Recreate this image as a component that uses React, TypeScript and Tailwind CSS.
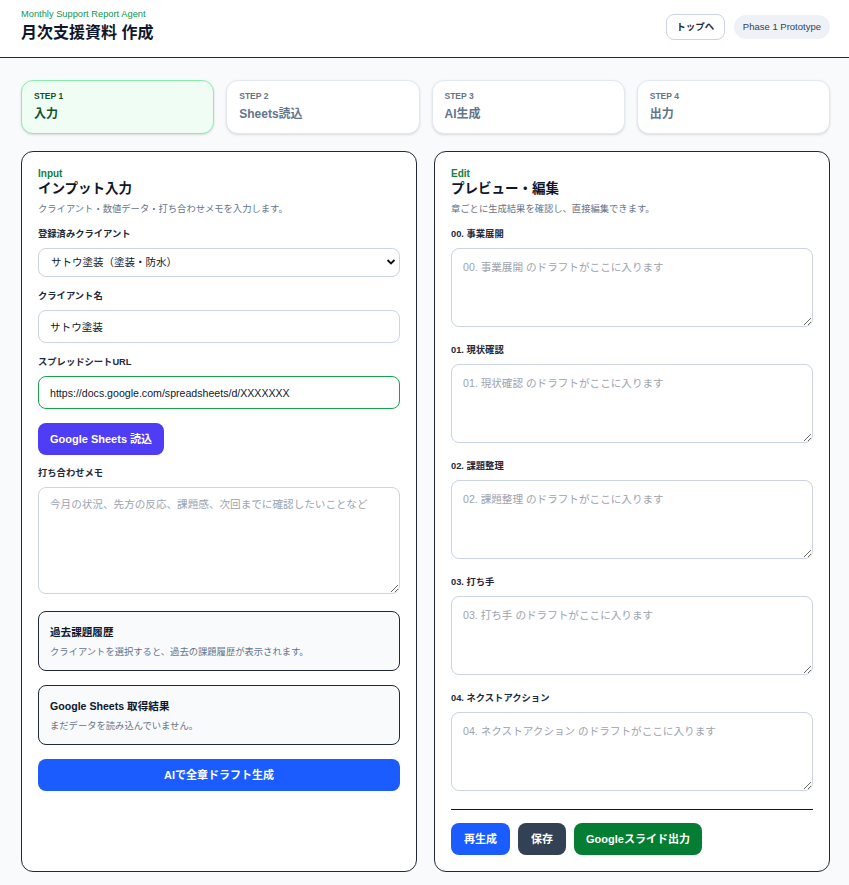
import React from "react";

const font = { fontFamily: '"Liberation Sans", "Noto Sans CJK JP", sans-serif' };

const steps = [
  { label: "STEP 1", title: "入力", active: true },
  { label: "STEP 2", title: "Sheets読込", active: false },
  { label: "STEP 3", title: "AI生成", active: false },
  { label: "STEP 4", title: "出力", active: false },
];

const sections = ["00. 事業展開", "01. 現状確認", "02. 課題整理", "03. 打ち手", "04. ネクストアクション"];

const Label = ({ children, className = "" }: { children: React.ReactNode; className?: string }) => (
  <label className={`block text-[9.3px] font-bold leading-[12px] text-[#1e293b] ${className}`}>{children}</label>
);

const PanelHead = ({ kicker, title, desc }: { kicker: string; title: string; desc: string }) => (
  <div>
    <div className="text-[10px] font-bold leading-[12px] text-[#15803d]">{kicker}</div>
    <h2 className="text-[13.5px] font-bold leading-[18px] text-[#0f172a]">{title}</h2>
    <p className="mt-[5px] text-[9.3px] leading-[12px] text-[#64748b]">{desc}</p>
  </div>
);

export default function App() {
  return (
    <div className="min-h-screen bg-[#f8fafc]" style={font}>
      <header className="flex h-[58px] justify-between border-b border-[#1f2937] bg-white pl-[21px] pr-[19px]">
        <div className="pt-[8px]">
          <div className="text-[9.3px] leading-[13px] text-[#0f9455]">Monthly Support Report Agent</div>
          <h1 className="mt-[1px] text-[16px] font-bold leading-[22px] text-[#0f172a]">月次支援資料 作成</h1>
        </div>
        <div className="flex items-center gap-[9px] self-start pt-[14px]">
          <button className="h-[26px] w-[59px] rounded-lg border border-[#cbd5e1] bg-white text-[9.5px] font-bold text-[#1e293b]">
            トップへ
          </button>
          <span className="flex h-[24px] items-center rounded-full bg-[#eef2f7] px-[9px] text-[9.5px] text-[#334155]">
            Phase 1 Prototype
          </span>
        </div>
      </header>

      <main className="pb-[14px] pl-[21px] pr-[19px] pt-[22px]">
        <div className="grid grid-cols-4 gap-[12px]">
          {steps.map((s) => (
            <div
              key={s.label}
              className={`h-[54px] rounded-xl border px-[12px] pt-[9px] shadow-sm ${
                s.active ? "border-[#86efac] bg-[#f0fdf4]" : "border-[#e2e8f0] bg-white"
              }`}
            >
              <div className={`text-[8.5px] font-bold leading-[12px] ${s.active ? "text-[#14532d]" : "text-[#64748b]"}`}>
                {s.label}
              </div>
              <div className={`mt-[3px] text-[12px] font-bold leading-[18px] ${s.active ? "text-[#14532d]" : "text-[#64748b]"}`}>
                {s.title}
              </div>
            </div>
          ))}
        </div>

        <div className="mt-[17px] grid grid-cols-2 gap-[17px]">
          <section className="h-[721px] rounded-xl border border-[#1f2937] bg-white px-4 pt-4">
            <PanelHead kicker="Input" title="インプット入力" desc="クライアント・数値データ・打ち合わせメモを入力します。" />

            <Label className="mt-[13px]">登録済みクライアント</Label>
            <div className="relative mt-[8px]">
              <select className="h-[29px] w-full appearance-none rounded-lg border border-[#cbd5e1] bg-white pl-[12px] text-[10.5px] text-[#0f172a] outline-none">
                <option>サトウ塗装（塗装・防水）</option>
              </select>
              <svg className="pointer-events-none absolute right-[4px] top-[10px]" width="10" height="8" viewBox="0 0 10 8">
                <path d="M1.5 2 L5 5.5 L8.5 2" fill="none" stroke="#111" strokeWidth="1.8" />
              </svg>
            </div>

            <Label className="mt-[13px]">クライアント名</Label>
            <input
              defaultValue="サトウ塗装"
              className="mt-[8px] h-[33px] w-full rounded-lg border border-[#cbd5e1] px-[11px] text-[10.6px] text-[#0f172a] outline-none"
            />

            <Label className="mt-[13px]">スプレッドシートURL</Label>
            <input
              defaultValue="https://docs.google.com/spreadsheets/d/XXXXXXX"
              className="mt-[8px] h-[33px] w-full rounded-lg border border-[#16a34a] px-[11px] text-[10.6px] text-[#0f172a] outline-none"
            />

            <button className="mt-[14px] h-[32px] rounded-lg bg-[#4f3cf5] px-[12px] text-[11px] font-bold text-white">
              Google Sheets 読込
            </button>

            <Label className="mt-[12px]">打ち合わせメモ</Label>
            <textarea
              placeholder="今月の状況、先方の反応、課題感、次回までに確認したいことなど"
              className="mt-[8px] block h-[107px] w-full rounded-lg border border-[#cbd5e1] px-[11px] py-[8px] text-[10.6px] leading-[16px] outline-none placeholder:text-[#9ca3af]"
            />

            <div className="mt-[17px] h-[60px] rounded-lg border border-[#1f2937] bg-[#f8fafc] px-[11px] pt-[13px]">
              <div className="text-[10.6px] font-bold leading-[14px] text-[#0f172a]">過去課題履歴</div>
              <div className="mt-[7px] text-[9.3px] leading-[12px] text-[#64748b]">
                クライアントを選択すると、過去の課題履歴が表示されます。
              </div>
            </div>

            <div className="mt-[14px] h-[60px] rounded-lg border border-[#1f2937] bg-[#f8fafc] px-[11px] pt-[13px]">
              <div className="text-[10.6px] font-bold leading-[14px] text-[#0f172a]">Google Sheets 取得結果</div>
              <div className="mt-[7px] text-[9.3px] leading-[12px] text-[#64748b]">まだデータを読み込んでいません。</div>
            </div>

            <button className="mt-[14px] h-[32px] w-full rounded-lg bg-[#1a5cff] text-[11px] font-bold text-white">
              AIで全章ドラフト生成
            </button>
          </section>

          <section className="h-[721px] rounded-xl border border-[#1f2937] bg-white px-4 pt-4">
            <PanelHead kicker="Edit" title="プレビュー・編集" desc="章ごとに生成結果を確認し、直接編集できます。" />

            {sections.map((s, i) => (
              <div key={s} className={i === 0 ? "mt-[13px]" : "mt-[17px]"}>
                <Label>{s}</Label>
                <textarea
                  placeholder={`${s} のドラフトがここに入ります`}
                  className="mt-[8px] block h-[79px] w-full rounded-lg border border-[#cbd5e1] px-[11px] py-[10px] text-[10.6px] leading-[16px] outline-none placeholder:text-[#9ca3af]"
                />
              </div>
            ))}

            <div className="mt-[18px] border-t border-[#111827]" />

            <div className="mt-[13px] flex gap-[8px]">
              <button className="h-[32px] rounded-lg bg-[#1a5cff] px-[13px] text-[11px] font-bold text-white">再生成</button>
              <button className="h-[32px] rounded-lg bg-[#334155] px-[13px] text-[11px] font-bold text-white">保存</button>
              <button className="h-[32px] rounded-lg bg-[#047e33] px-[12px] text-[11px] font-bold text-white">
                Googleスライド出力
              </button>
            </div>
          </section>
        </div>
      </main>
    </div>
  );
}
